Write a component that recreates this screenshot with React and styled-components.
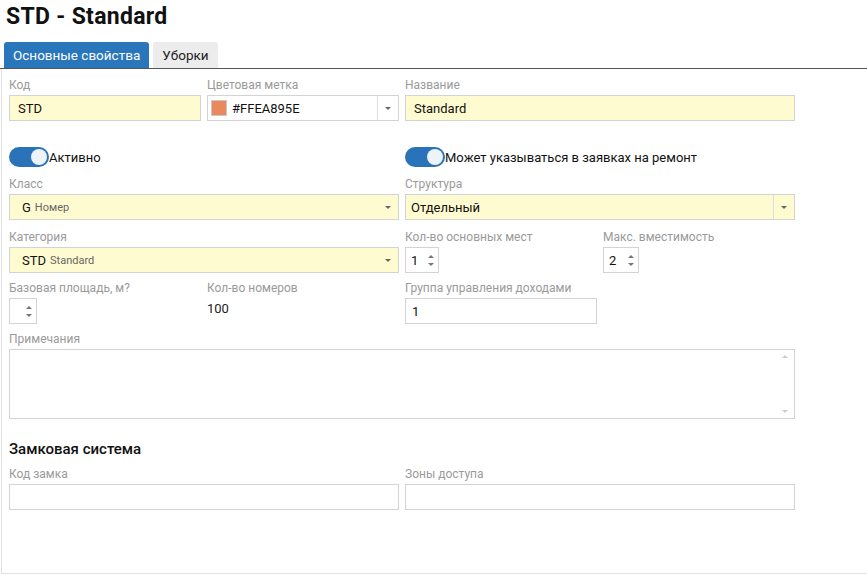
import React from "react";
import styled, { createGlobalStyle } from "styled-components";

const GlobalStyle = createGlobalStyle`
  body {
    margin: 0;
    background: #fff;
    font-family: Roboto, "Noto Sans", sans-serif;
    color: #111;
  }
`;

const Page = styled.div`
  width: 867px;
  height: 576px;
  overflow: hidden;
`;

const Title = styled.h1`
  margin: 0;
  padding: 3px 0 0 6px;
  height: 38px;
  box-sizing: border-box;
  font-size: 23px;
  font-weight: 700;
  letter-spacing: 0.3px;
  color: #111;
`;

const TabBar = styled.div`
  display: flex;
  gap: 4px;
  padding: 4px 0 0 4px;
  border-bottom: 1px solid #555;
`;

const Tab = styled.div`
  height: 26px;
  padding: 0 9px;
  display: flex;
  align-items: center;
  font-size: 13.5px;
  border-radius: 3px 3px 0 0;
  background: ${(p) => (p.$active ? "#2a76bb" : "#ececec")};
  color: ${(p) => (p.$active ? "#fff" : "#222")};
`;

const Panel = styled.div`
  border-left: 1px solid #e2e2e2;
  border-bottom: 1px solid #e2e2e2;
  margin-left: 1px;
  height: 505px;
  box-sizing: border-box;
  padding: 9px 0 0 7px;
`;

const Grid = styled.div`
  display: grid;
  grid-template-columns: repeat(4, 192px);
  column-gap: 6px;
  align-items: start;
`;

const Field = styled.div`
  grid-column: ${(p) => p.$span || "auto"};
  margin-bottom: ${(p) => p.$mb ?? 10}px;
  display: flex;
  flex-direction: column;
`;

const Label = styled.div`
  font-size: 12px;
  line-height: 14px;
  color: #9a9a9a;
  margin-bottom: 3px;
`;

const Box = styled.div`
  height: 26px;
  box-sizing: border-box;
  border: 1px solid #d3d3d3;
  background: ${(p) => (p.$yellow ? "#fffbd0" : "#fff")};
  display: flex;
  align-items: center;
  font-size: 13px;
  color: #111;
  padding-left: ${(p) => p.$pl ?? 8}px;
  width: ${(p) => p.$w || "auto"};
  position: relative;
`;

const Small = styled.span`
  font-size: 11px;
  color: #666;
  margin-left: 4px;
`;

const Arrow = styled.div`
  margin-left: auto;
  width: 20px;
  align-self: stretch;
  display: flex;
  align-items: center;
  justify-content: center;
  border-left: ${(p) => (p.$sep ? "1px solid #ddd" : "none")};
  &::after {
    content: "";
    border-left: 3px solid transparent;
    border-right: 3px solid transparent;
    border-top: 3px solid #666;
  }
`;

const Swatch = styled.span`
  width: 14px;
  height: 14px;
  background: #ea895e;
  border: 1px solid #c9c9c9;
  margin-right: 5px;
`;

const Spin = styled.div`
  margin-left: auto;
  width: 14px;
  display: flex;
  flex-direction: column;
  align-items: center;
  gap: 5px;
  &::before,
  &::after {
    content: "";
    border-left: 3px solid transparent;
    border-right: 3px solid transparent;
  }
  &::before {
    border-bottom: 3px solid #777;
  }
  &::after {
    border-top: 3px solid #777;
  }
`;

const SwitchRow = styled.div`
  grid-column: ${(p) => p.$span};
  display: flex;
  align-items: center;
  height: 20px;
  margin: 26px 0 10px;
  font-size: 13px;
  color: #111;
`;

const Switch = styled.span`
  width: 40px;
  height: 20px;
  border-radius: 10px;
  background: #2a73b8;
  position: relative;
  flex: none;
  &::after {
    content: "";
    position: absolute;
    right: 2px;
    top: 2px;
    width: 16px;
    height: 16px;
    border-radius: 50%;
    background: #eef3f8;
  }
`;

const Value = styled.div`
  font-size: 13px;
  padding-top: 3px;
  color: #222;
`;

const TextArea = styled.div`
  height: 70px;
  box-sizing: border-box;
  border: 1px solid #d3d3d3;
  position: relative;
  &::before,
  &::after {
    content: "";
    position: absolute;
    right: 6px;
    border-left: 3px solid transparent;
    border-right: 3px solid transparent;
  }
  &::before {
    top: 5px;
    border-bottom: 3px solid #ccc;
  }
  &::after {
    bottom: 5px;
    border-top: 3px solid #ccc;
  }
`;

const Section = styled.h2`
  grid-column: 1 / span 4;
  margin: 11px 0 9px;
  font-size: 15px;
  font-weight: 500;
  color: #111;
`;

export default function App() {
  return (
    <Page>
      <GlobalStyle />
      <Title>STD - Standard</Title>
      <TabBar>
        <Tab $active>Основные свойства</Tab>
        <Tab>Уборки</Tab>
      </TabBar>
      <Panel>
        <Grid>
          <Field $mb={0}>
            <Label>Код</Label>
            <Box $yellow>STD</Box>
          </Field>
          <Field $mb={0}>
            <Label>Цветовая метка</Label>
            <Box $pl={3}>
              <Swatch />
              #FFEA895E
              <Arrow $sep />
            </Box>
          </Field>
          <Field $span="3 / span 2" $mb={0}>
            <Label>Название</Label>
            <Box $yellow>Standard</Box>
          </Field>

          <SwitchRow $span="1 / span 2">
            <Switch />
            Активно
          </SwitchRow>
          <SwitchRow $span="3 / span 2">
            <Switch />
            Может указываться в заявках на ремонт
          </SwitchRow>

          <Field $span="1 / span 2">
            <Label>Класс</Label>
            <Box $yellow $pl={12}>
              G<Small>Номер</Small>
              <Arrow />
            </Box>
          </Field>
          <Field $span="3 / span 2">
            <Label>Структура</Label>
            <Box $yellow $pl={5}>
              Отдельный
              <Arrow $sep />
            </Box>
          </Field>

          <Field $span="1 / span 2" $mb={8}>
            <Label>Категория</Label>
            <Box $yellow $pl={12}>
              STD<Small>Standard</Small>
              <Arrow />
            </Box>
          </Field>
          <Field $mb={8}>
            <Label>Кол-во основных мест</Label>
            <Box $w="34px" $pl={5}>
              1<Spin />
            </Box>
          </Field>
          <Field $mb={8}>
            <Label>Макс. вместимость</Label>
            <Box $w="36px" $pl={5}>
              2<Spin />
            </Box>
          </Field>

          <Field $mb={8}>
            <Label>Базовая площадь, м?</Label>
            <Box $w="28px" $pl={0}>
              <Spin />
            </Box>
          </Field>
          <Field $mb={8}>
            <Label>Кол-во номеров</Label>
            <Value>100</Value>
          </Field>
          <Field $mb={8}>
            <Label>Группа управления доходами</Label>
            <Box $pl={6}>1</Box>
          </Field>
          <div />

          <Field $span="1 / span 4">
            <Label>Примечания</Label>
            <TextArea />
          </Field>

          <Section>Замковая система</Section>
          <Field $span="1 / span 2">
            <Label>Код замка</Label>
            <Box />
          </Field>
          <Field $span="3 / span 2">
            <Label>Зоны доступа</Label>
            <Box />
          </Field>
        </Grid>
      </Panel>
    </Page>
  );
}
